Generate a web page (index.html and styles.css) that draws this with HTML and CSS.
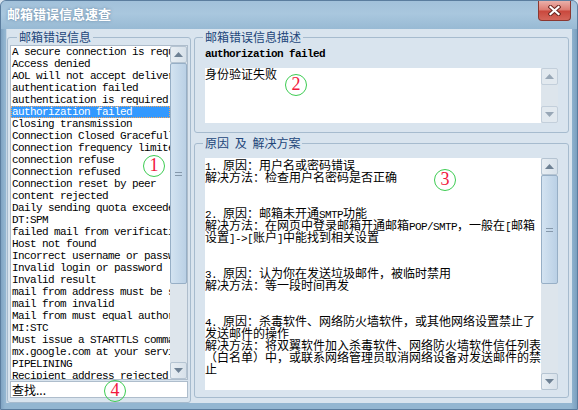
FILE: index.html
```html
<!DOCTYPE html>
<html lang="zh-CN">
<head>
<meta charset="utf-8">
<title>邮箱错误信息速查</title>
<link rel="stylesheet" href="styles.css">
</head>
<body>
<div class="window">
  <div class="titlebar">
    <span class="title">邮箱错误信息速查</span>
    <button class="close" aria-label="关闭">
      <svg width="13" height="11" viewBox="0 0 13 11"><path d="M2.5 2 L10.5 9 M10.5 2 L2.5 9" stroke="#6b2620" stroke-width="4.2" stroke-linecap="square"/><path d="M2.5 2 L10.5 9 M10.5 2 L2.5 9" stroke="#ffffff" stroke-width="2.2" stroke-linecap="square"/></svg>
    </button>
  </div>
  <div class="client">
    <fieldset class="group lgroup">
      <legend class="lg-left">邮箱错误信息</legend>
      <div class="listbox">
        <div class="list">
          <div class="row">A secure connection is required</div>
          <div class="row">Access denied</div>
          <div class="row">AOL will not accept delivery</div>
          <div class="row">authentication failed</div>
          <div class="row">authentication is required</div>
          <div class="row sel">authorization failed</div>
          <div class="row">Closing transmission</div>
          <div class="row">Connection Closed Gracefully</div>
          <div class="row">Connection frequency limited</div>
          <div class="row">connection refuse</div>
          <div class="row">Connection refused</div>
          <div class="row">Connection reset by peer</div>
          <div class="row">content rejected</div>
          <div class="row">Daily sending quota exceeded</div>
          <div class="row">DT:SPM</div>
          <div class="row">failed mail from verification</div>
          <div class="row">Host not found</div>
          <div class="row">Incorrect username or password</div>
          <div class="row">Invalid login or password</div>
          <div class="row">Invalid result</div>
          <div class="row">mail from address must be same</div>
          <div class="row">mail from invalid</div>
          <div class="row">Mail from must equal authorized</div>
          <div class="row">MI:STC</div>
          <div class="row">Must issue a STARTTLS command</div>
          <div class="row">mx.google.com at your service</div>
          <div class="row">PIPELINING</div>
          <div class="row">Recipient address rejected</div>
        </div>
        <div class="vscroll">
          <div class="sb-btn"><svg width="9" height="5" viewBox="0 0 9 5"><path d="M0 5 L4.5 0 L9 5 Z" fill="#6e8194"/></svg></div>
          <div class="sb-track"><div class="thumb thumb-l"><div class="grip"></div></div></div>
          <div class="sb-btn"><svg width="9" height="5" viewBox="0 0 9 5"><path d="M0 0 L9 0 L4.5 5 Z" fill="#6e8194"/></svg></div>
        </div>
      </div>
      <div class="search">查找...</div>
    </fieldset>
    <div class="splitter"></div>
    <div class="right">
      <fieldset class="group rgroup1">
        <legend class="lg-right">邮箱错误信息描述</legend>
        <div class="code">authorization failed</div>
        <div class="textbox tb1">
          <div class="tb-text"><div class="ln">身份验证失败</div></div>
          <div class="vscroll disabled">
            <div class="sb-btn"><svg width="9" height="5" viewBox="0 0 9 5"><path d="M0 5 L4.5 0 L9 5 Z" fill="#98a7b6"/></svg></div>
            <div class="sb-track"></div>
            <div class="sb-btn"><svg width="9" height="5" viewBox="0 0 9 5"><path d="M0 0 L9 0 L4.5 5 Z" fill="#98a7b6"/></svg></div>
          </div>
        </div>
      </fieldset>
      <fieldset class="group rgroup2">
        <legend class="lg-right spaced">原因 及 解决方案</legend>
        <div class="textbox tb2">
          <div class="tb-text tb-pad">
            <div class="ln"><span class="m">1. </span>原因：用户名或密码错误</div>
            <div class="ln">解决方法：检查用户名密码是否正确</div>
            <div class="ln"></div>
            <div class="ln"></div>
            <div class="ln"><span class="m">2. </span>原因：邮箱未开通<span class="m">SMTP</span>功能</div>
            <div class="ln">解决方法：在网页中登录邮箱开通邮箱<span class="m">POP/SMTP</span>，一般在<span class="m">[</span>邮箱</div>
            <div class="ln">设置<span class="m">]-&gt;[</span>账户<span class="m">]</span>中能找到相关设置</div>
            <div class="ln"></div>
            <div class="ln"></div>
            <div class="ln"><span class="m">3. </span>原因：认为你在发送垃圾邮件，被临时禁用</div>
            <div class="ln">解决方法：等一段时间再发</div>
            <div class="ln"></div>
            <div class="ln"></div>
            <div class="ln"><span class="m">4. </span>原因：杀毒软件、网络防火墙软件，或其他网络设置禁止了</div>
            <div class="ln">发送邮件的操作</div>
            <div class="ln">解决方法：将双翼软件加入杀毒软件、网络防火墙软件信任列表</div>
            <div class="ln">（白名单）中，或联系网络管理员取消网络设备对发送邮件的禁</div>
            <div class="ln">止</div>
          </div>
          <div class="vscroll">
            <div class="sb-btn"><svg width="9" height="5" viewBox="0 0 9 5"><path d="M0 5 L4.5 0 L9 5 Z" fill="#6e8194"/></svg></div>
            <div class="sb-track"><div class="thumb thumb-r"><div class="grip"></div></div></div>
            <div class="sb-btn"><svg width="9" height="5" viewBox="0 0 9 5"><path d="M0 0 L9 0 L4.5 5 Z" fill="#6e8194"/></svg></div>
          </div>
        </div>
      </fieldset>
    </div>
  </div>
  <div class="mark m1">1</div>
  <div class="mark m2">2</div>
  <div class="mark m3">3</div>
  <div class="mark m4">4</div>
</div>
</body>
</html>
```
FILE: styles.css
```css
* { box-sizing: border-box; }
html, body { margin: 0; padding: 0; }
body {
  width: 578px;
  height: 410px;
  overflow: hidden;
  background: #d9e4ee;
  font-family: "Noto Sans CJK SC", "Liberation Sans", sans-serif;
}
.window {
  position: relative;
  width: 578px;
  height: 410px;
  display: flex;
  flex-direction: column;
  border: 1px solid #5b7d9e;
  border-radius: 6px 6px 0 0;
  background: linear-gradient(to right, #7fa3c2 0, #93b6d1 4px, #93b6d1 570px, #7a9fbf 576px);
}
.titlebar {
  height: 28px;
  display: flex;
  justify-content: space-between;
  align-items: flex-start;
  border-radius: 5px 5px 0 0;
  background: linear-gradient(to bottom, #a2c1da 0%, #a9c7de 45%, #98bad4 100%);
}
.title {
  margin: 4px 0 0 6px;
  color: #ffffff;
  font-size: 13px;
  font-weight: bold;
  line-height: 18px;
  text-shadow: 0 0 3px rgba(45, 80, 115, 0.55);
}
.close {
  width: 33px;
  height: 20px;
  margin: 0 6px 0 0;
  padding: 0;
  border: 1px solid #8b3730;
  border-top: none;
  border-radius: 0 0 4px 4px;
  background: linear-gradient(to bottom, #eab0aa 0%, #dc7a70 48%, #c9473c 52%, #d4665a 100%);
  display: flex;
  align-items: center;
  justify-content: center;
}
.client {
  height: 374px;
  margin: 0 5px 6px 5px;
  padding: 1px 3px 0 0;
  display: flex;
  background: #d9e4ee;
  border-left: 1px solid #c5d6e5;
}
.group {
  margin: 0;
  min-width: 0;
  border: 1px solid #a6bbce;
  border-radius: 3px;
}
legend {
  padding: 0 2px;
  font-size: 12px;
  line-height: 14px;
  color: #22467a;
}
.spaced { word-spacing: 3px; }
.lgroup {
  width: 184px;
  padding: 1px 2px 3px 2px;
  display: flex;
  flex-direction: column;
}
.lg-left { margin-left: 7px; }
.lg-right { margin-left: -2px; }
.listbox {
  height: 335px;
  display: flex;
  border: 1px solid #aebdcc;
  background: #ffffff;
}
.list {
  flex: 1;
  min-width: 0;
  overflow: hidden;
  font-family: "Liberation Mono", monospace;
  font-size: 11px;
  letter-spacing: -0.6px;
  color: #000000;
}
.row {
  height: 12px;
  line-height: 12px;
  padding-left: 1px;
  white-space: nowrap;
}
.row.sel {
  background: #3399ff;
  color: #ffffff;
  outline: 1px dotted #f2a560;
  outline-offset: -1px;
}
.vscroll {
  width: 17px;
  display: flex;
  flex-direction: column;
  background: #dde5ec;
}
.sb-btn {
  height: 17px;
  display: flex;
  align-items: center;
  justify-content: center;
  border: 1px solid #b5c4d2;
  border-radius: 2px;
  background: linear-gradient(to right, #e8eef3, #d7e1ea);
}
.disabled .sb-btn {
  border-color: #c3cfdb;
  background: #e2e9ef;
}
.sb-track { flex: 1; }
.thumb {
  display: flex;
  align-items: center;
  justify-content: center;
  border: 1px solid #97afc6;
  border-radius: 2px;
  background: linear-gradient(to right, #d3e3f1, #bad0e5);
}
.thumb-l { height: 221px; }
.thumb-r { height: 109px; }
.grip {
  width: 7px;
  height: 4px;
  border-top: 1px solid #8598ab;
  border-bottom: 1px solid #8598ab;
}
.search {
  height: 17px;
  margin-top: 1px;
  padding-left: 1px;
  border: 1px solid #aebdcc;
  background: #ffffff;
  font-size: 12px;
  line-height: 15px;
  color: #000000;
}
.splitter { width: 3px; }
.right {
  width: 375px;
  display: flex;
  flex-direction: column;
}
.rgroup1 { padding: 2px 10px 9px 10px; }
.rgroup2 {
  margin-top: 3px;
  padding: 8px 10px 7px 10px;
}
.code {
  height: 17px;
  line-height: 17px;
  font-family: "Liberation Mono", monospace;
  font-size: 11px;
  font-weight: bold;
  letter-spacing: -0.6px;
  color: #000000;
}
.textbox {
  display: flex;
  background: #ffffff;
}
.tb1 { height: 55px; margin-top: 5px; }
.tb2 { height: 232px; }
.tb-text {
  flex: 1;
  min-width: 0;
  overflow: hidden;
  font-size: 12px;
  color: #000000;
}
.tb-pad { padding-top: 1px; }
.ln {
  height: 12px;
  line-height: 12px;
  white-space: pre;
}
.m {
  font-family: "Liberation Mono", monospace;
  font-size: 11px;
  letter-spacing: -0.6px;
}
.mark {
  position: absolute;
  width: 22px;
  height: 22px;
  border: 1.5px solid #3dcc52;
  border-radius: 50%;
  color: #f2173d;
  font-family: "Liberation Serif", serif;
  font-size: 18px;
  line-height: 19px;
  text-align: center;
}
.m1 { left: 142px; top: 154px; }
.m2 { left: 284px; top: 73px; }
.m3 { left: 433px; top: 168px; }
.m4 { left: 103px; top: 379px; }
```
